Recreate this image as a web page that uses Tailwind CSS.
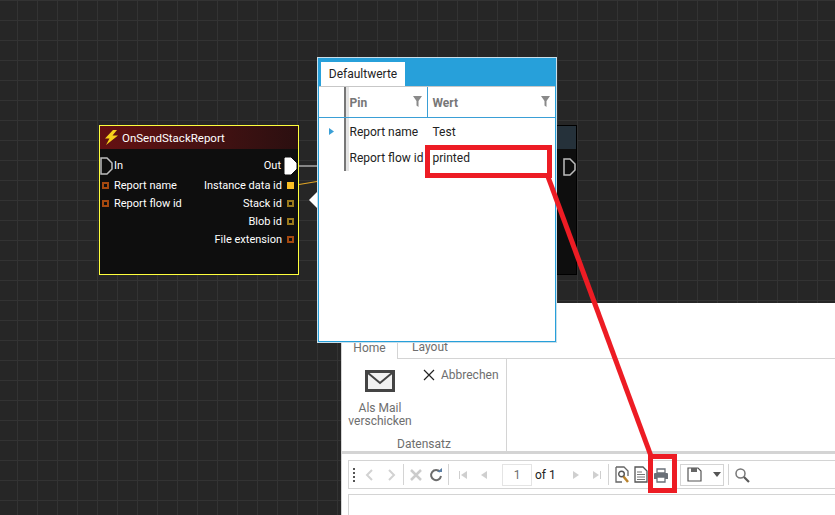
<!DOCTYPE html>
<html lang="en">
<head>
<meta charset="UTF-8">
<title>Flow Editor</title>
<script src="https://cdn.jsdelivr.net/npm/@tailwindcss/browser@4"></script>
</head>
<body class="bg-[#262626] font-['Roboto',sans-serif] text-[12px] overflow-hidden">
<!-- canvas: nodes and windows sit on a free surface -->
<div class="relative w-[835px] h-[515px] overflow-hidden bg-[#262626] bg-[linear-gradient(#333333_1px,transparent_1px),linear-gradient(90deg,#333333_1px,transparent_1px)] bg-[size:20px_20px] bg-[position:17px_0px]">

  <!-- connections -->
  <svg class="absolute left-0 top-0" width="835" height="515">
    <line x1="298" y1="166" x2="320" y2="166" stroke="#a8a8a8" stroke-width="1.5"/>
    <line x1="296" y1="185" x2="320" y2="181" stroke="#e0a526" stroke-width="1.2"/>
  </svg>

  <!-- node behind the popup -->
  <div class="absolute left-[500px] top-[125px] w-[77px] h-[150px] bg-[#0e0e0e] border border-black">
    <div class="h-[23px] bg-[#25313a]"></div>
    <svg class="absolute left-[62px] top-[32px]" width="14" height="18"><path d="M1 1H7L12 6V12L7 17H1Z" fill="none" stroke="#bdbdbd" stroke-width="1.5"/></svg>
  </div>

  <!-- OnSendStackReport node -->
  <div class="absolute left-[99px] top-[125px] w-[200px] h-[150px] bg-[#0e0e0e] border border-[#ffff3c] text-white">
    <div class="h-[23px] flex items-center pl-[4px] gap-[3px] bg-gradient-to-r from-[#651012] to-[#2b0f10]">
      <svg width="15" height="17" viewBox="0 0 15 17"><path d="M9 1L1 9.500H5.500L2 16L14 6.500H8.500L13 1Z" fill="#f7d21b"/></svg>
      <span class="text-[11.500px] leading-none mt-[3px]">OnSendStackReport</span>
    </div>
    <div class="flex justify-between pt-[7px] text-[11px] leading-[18px]">
      <div class="flex flex-col">
        <div class="h-[20px] flex items-center">
          <svg width="14" height="18"><path d="M1 1H7L12 6V12L7 17H1Z" fill="none" stroke="#bdbdbd" stroke-width="1.500"/></svg>
          <span>In</span>
        </div>
        <div class="h-[18px] flex items-center gap-[5px] pl-[2px] pt-px"><i class="block w-[7px] h-[7px] border-2 border-[#a4480f]"></i>Report name</div>
        <div class="h-[18px] flex items-center gap-[5px] pl-[2px] pt-px"><i class="block w-[7px] h-[7px] border-2 border-[#a4480f]"></i>Report flow id</div>
      </div>
      <div class="flex flex-col items-end">
        <div class="h-[20px] flex items-center gap-[3px]">
          <span>Out</span>
          <svg width="14" height="18"><path d="M1 1H7L12 6V12L7 17H1Z" fill="#ffffff" stroke="#ffffff" stroke-width="1"/></svg>
        </div>
        <div class="h-[18px] flex items-center gap-[5px] pr-[4px] pt-px">Instance data id<i class="block w-[7px] h-[7px] bg-[#fbbf24]"></i></div>
        <div class="h-[18px] flex items-center gap-[5px] pr-[4px] pt-px">Stack id<i class="block w-[7px] h-[7px] border-2 border-[#9a7a1c]"></i></div>
        <div class="h-[18px] flex items-center gap-[5px] pr-[4px] pt-px">Blob id<i class="block w-[7px] h-[7px] border-2 border-[#9a7a1c]"></i></div>
        <div class="h-[18px] flex items-center gap-[5px] pr-[4px] pt-px">File extension<i class="block w-[7px] h-[7px] border-2 border-[#a4480f]"></i></div>
      </div>
    </div>
  </div>

  <!-- report window -->
  <div class="absolute left-[341px] top-[303px] right-0 bottom-0 bg-white border-l border-[#d4d4d4] flex flex-col text-[#6e6e6e]">
    <div class="h-[56px] flex items-end border-b border-[#d4d4d4] shrink-0">
      <div class="w-[56px] h-[20px] bg-white border-r border-[#d4d4d4] -mb-px text-center pt-[2px] leading-[14px] text-[12px]">Home</div>
      <div class="w-[64px] h-[20px] text-center pt-[2px] leading-[14px] text-[12px]">Layout</div>
    </div>
    <div class="h-[92px] flex shrink-0">
      <div class="w-[165px] h-full border-r border-[#d4d4d4] flex flex-col">
        <div class="flex-1 flex">
          <div class="w-[76px] flex flex-col items-center pt-[10px]">
            <svg width="30" height="24" viewBox="0 0 30 24"><rect x="1.500" y="2.500" width="27" height="19" fill="#f1f1f1" stroke="#444444" stroke-width="3"/><path d="M3 4L15 14L27 4" fill="none" stroke="#444444" stroke-width="2"/></svg>
            <div class="text-center text-[12px] leading-[13px] mt-[9px]">Als Mail<br>verschicken</div>
          </div>
          <div class="flex items-start pt-[8px] pl-[4px] gap-[5px] text-[12px] leading-[16px]">
            <svg width="14" height="14" class="mt-px" viewBox="0 0 14 14"><path d="M2 2L12 12M12 2L2 12" stroke="#222222" stroke-width="1.200"/></svg>
            <span>Abbrechen</span>
          </div>
        </div>
        <div class="text-center text-[12px] leading-[16px] -mb-[1px]">Datensatz</div>
      </div>
    </div>
    <div class="h-[3px] bg-[#d4d4d4] shrink-0"></div>
    <div class="pl-[6px] pt-[6px] shrink-0">
      <div class="h-[29px] border border-[#d4d4d4] border-r-0 flex items-center">
        <div class="w-[12px] flex flex-col items-center gap-[2px] ml-[-1px]"><i class="block w-[2px] h-[2px] bg-[#555]"></i><i class="block w-[2px] h-[2px] bg-[#555]"></i><i class="block w-[2px] h-[2px] bg-[#555]"></i><i class="block w-[2px] h-[2px] bg-[#555]"></i></div>
        <svg class="ml-[1px]" width="20" height="14" viewBox="0 0 20 14"><path d="M11 2L6 7L11 12" fill="none" stroke="#d2d2d2" stroke-width="2"/></svg>
        <svg width="20" height="14" viewBox="0 0 20 14"><path d="M8 2L13 7L8 12" fill="none" stroke="#d2d2d2" stroke-width="2"/></svg>
        <i class="block w-px h-[21px] bg-[#d4d4d4] ml-[2px] mr-[2px]"></i>
        <svg width="20" height="14" viewBox="0 0 20 14"><path d="M5 2L15 12M15 2L5 12" stroke="#cccccc" stroke-width="2.500"/></svg>
        <svg width="20" height="16" viewBox="0 0 20 16"><path d="M14 5A5 5 0 1 0 15 9" fill="none" stroke="#6d6d6d" stroke-width="2"/><path d="M11 5H16V1Z" fill="#5b7fa6"/></svg>
        <i class="block w-px h-[21px] bg-[#d4d4d4] mx-[2px]"></i>
        <svg class="ml-[3px]" width="20" height="12" viewBox="0 0 20 12"><path d="M5 2H6V10H5ZM13 2V10L7 6Z" fill="#cfcfcf"/></svg>
        <svg width="20" height="12" viewBox="0 0 20 12"><path d="M13 2V10L7 6Z" fill="#cfcfcf"/></svg>
        <div class="ml-[8px] w-[30px] h-[22px] border border-[#e4e4e4] text-center leading-[20px] text-[#6e6e6e]">1</div>
        <span class="ml-[3px] text-[#222] text-[12px]">of 1</span>
        <svg class="ml-[10px]" width="20" height="12" viewBox="0 0 20 12"><path d="M7 2V10L13 6Z" fill="#cfcfcf"/></svg>
        <svg width="20" height="12" viewBox="0 0 20 12"><path d="M7 2V10L13 6ZM14 2H15V10H14Z" fill="#cfcfcf"/></svg>
        <i class="block w-px h-[21px] bg-[#d4d4d4] mx-[2px]"></i>
        <svg class="ml-[3px]" width="16" height="18" viewBox="0 0 16 18"><path d="M2 1H10L14 5V10M8 16H2V1" fill="#fff" stroke="#666" stroke-width="1.300"/><circle cx="7.500" cy="8" r="2.800" fill="none" stroke="#555" stroke-width="1.400"/><path d="M9.500 10.500L14 16" stroke="#b9822b" stroke-width="2.500"/></svg>
        <svg class="ml-[3px]" width="16" height="18" viewBox="0 0 16 18"><path d="M2 1H10L14 5V16H2Z" fill="#fff" stroke="#555" stroke-width="1.300"/><path d="M4 6H9M4 8.500H12M4 11H12M4 13.500H12" stroke="#777" stroke-width="1"/></svg>
        <svg class="ml-[4px]" width="16" height="16" viewBox="0 0 16 16"><path d="M4 2H12V6H4Z" fill="none" stroke="#6a7078" stroke-width="1.300"/><path d="M2 6H14Q15 6 15 7V12H1V7Q1 6 2 6Z" fill="#6a7078"/><path d="M4 10H12V15H4Z" fill="#fff" stroke="#6a7078" stroke-width="1.300"/></svg>
        <div class="ml-[11px] w-[44px] h-[22px] border border-[#d4d4d4] flex items-center pl-[6px] gap-[11px]">
          <svg width="15" height="15" viewBox="0 0 15 15"><path d="M1 1H11L14 4V14H1Z" fill="#fff" stroke="#555" stroke-width="1.200"/><path d="M4 1H10V5H4Z" fill="#666"/></svg>
          <svg width="8" height="5" viewBox="0 0 8 5"><path d="M0 0H8L4 5Z" fill="#555"/></svg>
        </div>
        <i class="block w-px h-[21px] bg-[#d4d4d4] ml-[4px] mr-[5px]"></i>
        <svg width="16" height="16" viewBox="0 0 16 16"><circle cx="6.500" cy="6.500" r="4.500" fill="none" stroke="#777" stroke-width="1.500"/><path d="M10 10L15 15" stroke="#5a5a5a" stroke-width="2.200"/></svg>
      </div>
    </div>
    <div class="flex-1 ml-[6px] mt-[5px] border-t border-l border-[#d4d4d4]"></div>
  </div>

  <!-- Defaultwerte popup -->
  <div class="absolute left-[317px] top-[57px] w-[240px] h-[286px] bg-[#27a0da] border border-[#c9dfeb] flex flex-col text-[#222]">
    <div class="h-[28px] flex items-end pl-[3px] shrink-0">
      <div class="w-[84px] h-[24px] bg-white text-center leading-[25px] text-[12px]">Defaultwerte</div>
    </div>
    <div class="flex-1 bg-white mx-[1px] mb-[1px] border-t border-[#c7c7c7]">
      <div class="h-[31px] flex border-b border-[#3a9fd6]">
        <div class="w-[25px] shrink-0"></div>
        <div class="w-[1.500px] bg-[#777] shrink-0"></div>
        <div class="w-[3px] bg-[#e4e4e4] shrink-0"></div>
        <div class="w-[79px] border-r border-[#3a9fd6] flex items-center justify-between pl-[1px] pr-[5px] pt-[1px] font-bold text-[#777] shrink-0">
          <span>Pin</span>
          <svg width="9" height="11" viewBox="0 0 9 11" class="-mt-[3px]"><path d="M0 0H9L5.500 5V11L3.500 9.500V5Z" fill="#8a8a8a"/></svg>
        </div>
        <div class="flex-1 flex items-center justify-between pl-[5px] pr-[5px] pt-[1px] font-bold text-[#777]">
          <span>Wert</span>
          <svg width="9" height="11" viewBox="0 0 9 11" class="-mt-[3px]"><path d="M0 0H9L5.500 5V11L3.500 9.500V5Z" fill="#8a8a8a"/></svg>
        </div>
      </div>
      <div class="flex">
        <div class="w-[25px] pl-[10px] pt-[10px] shrink-0">
          <svg width="5" height="7" viewBox="0 0 5 7"><path d="M0 0L5 3.500L0 7Z" fill="#3a9fd6"/></svg>
        </div>
        <div class="w-[1.500px] bg-[#777] shrink-0"></div>
        <div class="w-[3px] bg-[#e4e4e4] shrink-0"></div>
        <div class="flex-1 pt-[1px]">
          <div class="h-[26px] flex items-center"><span class="w-[79px] pl-[1px]">Report name</span><span class="pl-[5px]">Test</span></div>
          <div class="h-[26px] flex items-center"><span class="w-[79px] pl-[1px] whitespace-nowrap">Report flow id</span><span class="pl-[5px]">printed</span></div>
        </div>
      </div>
    </div>
    <svg class="absolute left-[-9px] top-[134px]" width="8" height="16" viewBox="0 0 8 16"><path d="M8 0V16L0 8Z" fill="#ffffff"/></svg>
  </div>

  <!-- red annotations -->
  <div class="absolute left-[425px] top-[145px] w-[127px] h-[33px] border-[5px] border-[#ed1c24]"></div>
  <div class="absolute left-[648px] top-[454px] w-[29px] h-[39px] border-[5px] border-[#ed1c24]"></div>
  <svg class="absolute left-0 top-0" width="835" height="515"><line x1="547" y1="174" x2="651" y2="456" stroke="#ed1c24" stroke-width="5"/></svg>
</div>
</body>
</html>
